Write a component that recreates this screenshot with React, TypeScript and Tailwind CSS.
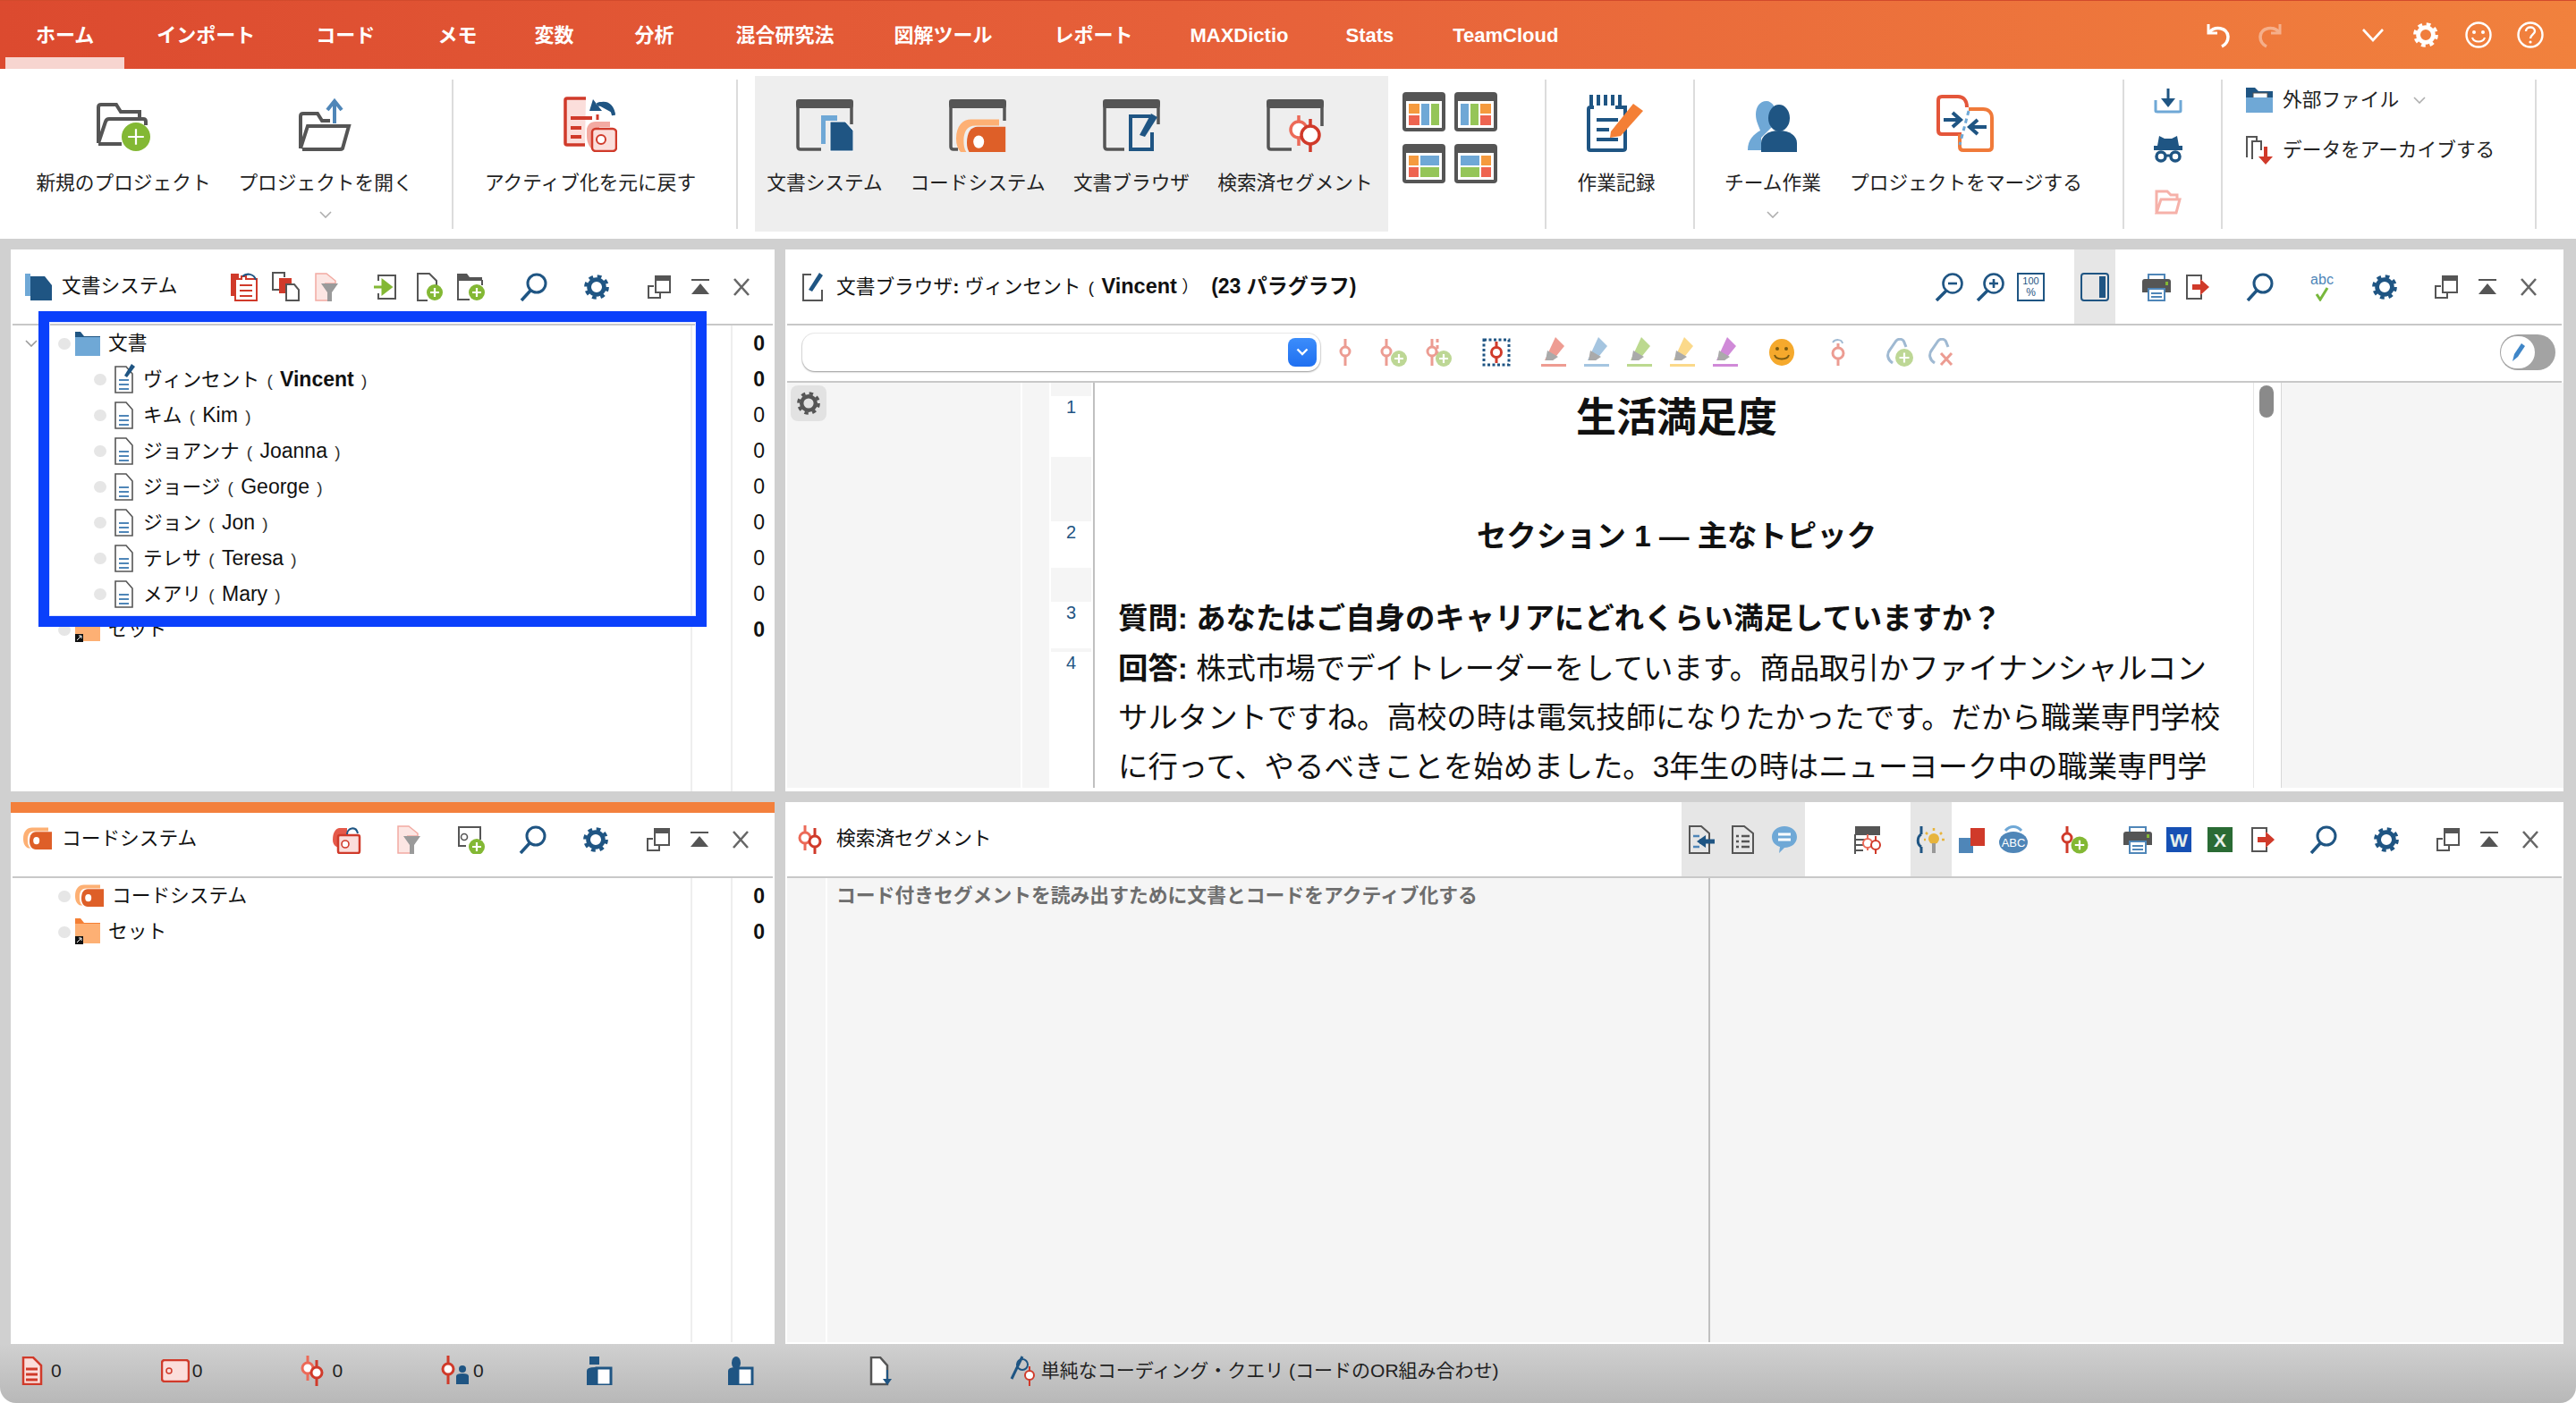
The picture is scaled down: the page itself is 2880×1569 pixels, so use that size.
import React from 'react';

const G = '#555555';
const B = '#1f5583';
const LB = '#6fa8d6';
const R = '#d03a2a';
const O = '#de5f28';
const LO = '#fdb074';
const GR = '#83b834';

type SvgProps = { w: number; h: number; className?: string; children?: React.ReactNode };
const Svg = ({ w, h, className, children }: SvgProps) => (
  <svg width={w} height={h} viewBox={`0 0 ${w} ${h}`} fill="none" className={`shrink-0 ${className || ''}`}>
    {children}
  </svg>
);

// small building blocks shared by the toolbar icons
const SegMark = ({ x, top, bottom, cy, r = 6, color = R, sw = 3 }: { x: number; top: number; bottom: number; cy: number; r?: number; color?: string; sw?: number }) => (
  <g stroke={color} strokeWidth={sw}>
    <path d={`M${x} ${top}V${cy - r}M${x} ${cy + r}V${bottom}`} />
    <circle cx={x} cy={cy} r={r} fill="#fff" />
  </g>
);
const PlusBadge = ({ cx, cy, r = 9, color = GR }: { cx: number; cy: number; r?: number; color?: string }) => (
  <g>
    <circle cx={cx} cy={cy} r={r} fill={color} />
    <path d={`M${cx - r * 0.55} ${cy}H${cx + r * 0.55}M${cx} ${cy - r * 0.55}V${cy + r * 0.55}`} stroke="#fff" strokeWidth={2.2} />
  </g>
);
const CodeTag = ({ x, y, s = 1 }: { x: number; y: number; s?: number }) => (
  <g transform={`translate(${x} ${y}) scale(${s})`}>
    <path d="M0 20C0 8 6 2 14 2H40V8H18C10 8 7 14 7 22C7 28 8 32 12 35H8C3 33 0 28 0 20Z" fill={LO} />
    <path d="M10 24C10 14 14 9 20 9H46V37H20C14 37 10 32 10 24Z" fill={O} />
    <ellipse cx="21" cy="23" rx="5" ry="6" fill="#fff" />
  </g>
);

const NewProjectIcon = () => (
  <Svg w={64} h={56}>
    <path d="M4 46V6Q4 3 7 3H24L29 11H50V20" stroke={G} strokeWidth={4} />
    <path d="M4 46L12 22Q13 19 16 19H54Q57 19 57 22V26M4 47H30" stroke={G} strokeWidth={4} />
    <PlusBadge cx={46} cy={39} r={16} />
  </Svg>
);
const OpenProjectIcon = () => (
  <Svg w={62} h={60}>
    <path d="M3 56V20Q3 17 6 17H22L27 25H36" stroke={G} strokeWidth={4} />
    <path d="M3 56L11 31H57L50 56Q49 57 47 57H5" stroke={G} strokeWidth={4} />
    <path d="M41 28V6M33 13L41 3L49 13" stroke="#4f86b8" strokeWidth={4} />
  </Svg>
);
const ResetActivationIcon = () => (
  <Svg w={60} h={62}>
    <path d="M25 2H4Q2 2 2 4V52Q2 54 4 54H24" fill="#fbdedb" stroke={R} strokeWidth={3.5} />
    <path d="M8 24H32M8 35H20M8 45H20" stroke={R} strokeWidth={4} />
    <path d="M38 20V26" stroke={R} strokeWidth={3} />
    <path d="M26 38C26 32 30 28 36 28H52V34H40V60H36C30 60 26 52 26 44Z" fill="#f3aaa2" />
    <rect x="32" y="36" width="27" height="25" rx="4" fill="#fbdedb" stroke={R} strokeWidth={2.5} />
    <circle cx="42" cy="48" r="5" fill="#fff" stroke={R} strokeWidth={2} />
    <path d="M33 3L29 16L43 16ZM36 8C46 3 56 6 58 20" fill={B} />
    <path d="M38 9C47 6 54 10 56 21" stroke={B} strokeWidth={4} />
  </Svg>
);
const Frame = ({ cut = 28, right = 28 }: { cut?: number; right?: number }) => (
  <g>
    <rect x="0" y="0" width="64" height="10" rx="3" fill={G} />
    <path d={`M2 8V53Q2 56 5 56H${cut}M62 8V${right}`} stroke={G} strokeWidth={3.5} />
  </g>
);
const DocSystemIcon = () => (
  <Svg w={64} h={59}>
    <Frame />
    <path d="M28 18H46V24H33V50H28Z" fill={LB} />
    <path d="M38 25H55L64 35V58H38Z" fill={B} stroke="#fff" strokeWidth={1} />
  </Svg>
);
const CodeSystemIcon = () => (
  <Svg w={64} h={59}>
    <Frame cut={10} right={24} />
    <CodeTag x={8} y={20} s={1.2} />
  </Svg>
);
const BrowserIcon = () => (
  <Svg w={64} h={59}>
    <Frame cut={24} />
    <path d="M53 19H31V56H55V37" stroke={B} strokeWidth={4} />
    <path d="M41 40L54 16L61 20L47 42Z" fill={B} />
  </Svg>
);
const SegmentsIcon = () => (
  <Svg w={64} h={59}>
    <Frame cut={28} right={30} />
    <SegMark x={36} top={18} bottom={52} cy={34} r={9} color="#ec6a58" sw={3.5} />
    <SegMark x={49} top={22} bottom={59} cy={40} r={10} sw={3.5} />
  </Svg>
);
const Layout = ({ cells }: { cells: [number, number, number, number, string][] }) => (
  <Svg w={48} h={44}>
    <rect width="48" height="44" rx="4" fill={G} />
    <rect x="4" y="10" width="40" height="30" fill="#fff" />
    {cells.map(([x, y, w, h, c], i) => (
      <rect key={i} x={x} y={y} width={w} height={h} fill={c} />
    ))}
  </Svg>
);
const ORG = '#f59a3e';
const RED = '#ee6450';
const BLU = '#6fa8d6';
const GRN = '#95c558';
const WorkLogIcon = () => (
  <Svg w={66} h={64}>
    <path d="M8 14H4Q2 14 2 16V60Q2 62 4 62H40Q43 62 43 60V14H32" stroke={B} strokeWidth={4} />
    <path d="M5 0V12M13 0V12M21 0V12M29 0V12M37 0V12" stroke={B} strokeWidth={4} />
    <path d="M11 28H35M11 39H25M11 50H35" stroke={B} strokeWidth={4} />
    <path d="M27 41L52 10L63 18L38 46L26 48Z" fill="#f47f35" />
  </Svg>
);
const TeamIcon = () => (
  <Svg w={58} h={58}>
    <path d="M22 1C14 1 10 8 10 16C10 24 14 30 15 34C8 38 1 44 1 56H16V42L28 30C32 24 30 12 30 6C28 3 25 1 22 1Z" fill={LB} />
    <ellipse cx="36" cy="20" rx="12" ry="15" fill={B} />
    <path d="M16 58V48C16 40 24 34 36 34C48 34 56 40 56 48V58Z" fill={B} />
  </Svg>
);
const MergeIcon = () => (
  <Svg w={66} h={64}>
    <path d="M28 44H6Q2 44 2 40V6Q2 2 6 2H24C30 2 34 6 34 14" stroke="#e4563a" strokeWidth={4} />
    <path d="M36 16H52C58 16 62 20 62 26V58Q62 62 58 62H30Q26 62 26 58V44" stroke="#f07a3a" strokeWidth={4} />
    <path d="M8 28H24M18 20L27 28L18 36" stroke={B} strokeWidth={4} />
    <path d="M56 36H40M46 28L37 36L46 44" stroke={B} strokeWidth={4} />
    <path d="M36 18L26 56" stroke={LB} strokeWidth={3} strokeDasharray="5 4" />
  </Svg>
);
const DownloadTrayIcon = () => (
  <Svg w={32} h={28}>
    <path d="M2 13V25Q2 26 4 26H28Q30 26 30 25V13" stroke={LB} strokeWidth={3} />
    <path d="M16 0V17" stroke={B} strokeWidth={3} />
    <path d="M8 11L16 21L24 11Z" fill={B} />
  </Svg>
);
const SpyIcon = () => (
  <Svg w={32} h={30}>
    <path d="M6 0L12 3H20L26 0L28 11H32V16H0V11H4Z" fill={B} />
    <circle cx="8" cy="23" r="5" stroke={B} strokeWidth={3.5} />
    <circle cx="24" cy="23" r="5" stroke={B} strokeWidth={3.5} />
    <path d="M13 22H19" stroke={B} strokeWidth={3} />
  </Svg>
);
const PinkFolderIcon = () => (
  <Svg w={30} h={30}>
    <path d="M2 26V3H14L18 7H25V11M2 27L7 12H28L24 27Z" stroke="#f6b1a9" strokeWidth={3} />
  </Svg>
);
const ExternalFolderIcon = () => (
  <Svg w={30} h={28}>
    <path d="M0 0H10L14 4H30V12H0Z" fill={B} />
    <rect x="8" y="6" width="16" height="10" fill="#fff" stroke={G} strokeWidth={1} />
    <path d="M0 11H30V28H0Z" fill={LB} />
  </Svg>
);
const ArchiveIcon = () => (
  <Svg w={30} h={32}>
    <path d="M1 24V1H12V6" stroke={G} strokeWidth={2} />
    <path d="M7 26V6H17V16" stroke={G} strokeWidth={2} />
    <path d="M22 12V26" stroke={R} strokeWidth={4} />
    <path d="M14 23H30L22 32Z" fill={R} />
  </Svg>
);
const Chevron = ({ c = '#aeaeae', className }: { c?: string; className?: string }) => (
  <Svg w={14} h={8} className={className}>
    <path d="M1 1L7 7L13 1" stroke={c} strokeWidth={1.6} />
  </Svg>
);

// panel toolbar icons
const DocIcon = ({ pen }: { pen?: boolean }) => (
  <Svg w={24} h={34}>
    <path d="M2 3H14L21 11V32H2Z" stroke={G} strokeWidth={1.6} fill="#fff" />
    <path d="M6 18H17M6 23H17M6 28H17" stroke="#4f86b8" strokeWidth={2} />
    {pen && <path d="M12 13L20 0L24 3L15 15Z" fill={B} />}
  </Svg>
);
const DocSmall = () => (
  <Svg w={30} h={32}>
    <path d="M0 2H6V27H0Z" fill={LB} />
    <path d="M6 5H22L30 15V32H6Z" fill={B} />
  </Svg>
);
const DocUndoIcon = () => (
  <Svg w={30} h={32}>
    <path d="M0 1H9V26H0Z" fill={R} />
    <path d="M5 7H12V4H17V7H29V31H5Z" fill="#fff" stroke={R} strokeWidth={2} />
    <path d="M10 14H24M10 20H24M10 26H24" stroke={R} strokeWidth={2} />
    <path d="M13 4C18 0 26 1 28 8" stroke={B} strokeWidth={2} />
  </Svg>
);
const CopyDocsIcon = () => (
  <Svg w={32} h={33}>
    <path d="M10 20H2V1H15V6" stroke={G} strokeWidth={2} />
    <path d="M9 7H23V20H16V24H9Z" fill={R} />
    <path d="M17 14H26L31 20V32H17Z" fill="#fff" stroke={G} strokeWidth={2} />
  </Svg>
);
const FilterDocIcon = ({ w = 26, h = 32 }: { w?: number; h?: number }) => (
  <Svg w={w} h={h}>
    <path d="M1 1H13L23 9V12H12L17 22V31H1Z" fill="#fce6e3" stroke="#f2aba3" strokeWidth={1.5} />
    <path d="M7 12H26L19 22V32H14V22Z" fill="#9a9a9a" />
  </Svg>
);
const ImportIcon = () => (
  <Svg w={26} h={30}>
    <path d="M5 8V2H24V28H5V22" stroke={G} strokeWidth={2} />
    <path d="M0 15H10M10 8L19 15L10 22Z" fill={GR} stroke={GR} strokeWidth={3} />
  </Svg>
);
const DocPlusIcon = () => (
  <Svg w={30} h={32}>
    <path d="M12 31H1V1H14L22 9V16" stroke={G} strokeWidth={2} />
    <PlusBadge cx={20} cy={22} r={9} />
  </Svg>
);
const FolderPlusSmall = () => (
  <Svg w={32} h={32}>
    <path d="M0 1H11L14 5H28V9H0Z" fill={G} />
    <path d="M1 8V30H14M28 8V14" stroke={G} strokeWidth={2} />
    <PlusBadge cx={22} cy={22} r={9} />
  </Svg>
);
const SearchIcon = () => (
  <Svg w={32} h={32}>
    <circle cx="19" cy="12" r="10" stroke={B} strokeWidth={3} />
    <path d="M12 20L2 31" stroke={B} strokeWidth={3.5} />
  </Svg>
);
const GearIcon = ({ c = B, s = 28 }: { c?: string; s?: number }) => (
  <Svg w={s} h={s}>
    <circle cx={s / 2} cy={s / 2} r={s * 0.3} stroke={c} strokeWidth={s * 0.17} />
    <circle cx={s / 2} cy={s / 2} r={s * 0.43} stroke={c} strokeWidth={s * 0.13} strokeDasharray={`${s * 0.17} ${s * 0.17}`} />
  </Svg>
);
const WindowIcon = () => (
  <Svg w={28} h={27}>
    <path d="M8 13H2V26H15V21" stroke={G} strokeWidth={2} />
    <rect x="9" y="1" width="18" height="6" fill={G} />
    <rect x="10" y="2" width="16" height="18" stroke={G} strokeWidth={2} />
  </Svg>
);
const CollapseIcon = () => (
  <Svg w={22} h={17}>
    <path d="M1 1H21" stroke={G} strokeWidth={2} />
    <path d="M11 5L21 17H1Z" fill={G} />
  </Svg>
);
const CloseIcon = () => (
  <Svg w={20} h={20}>
    <path d="M2 1L18 19M18 1L2 19" stroke="#666" strokeWidth={2.6} />
  </Svg>
);
const ZoomIcon = ({ plus }: { plus?: boolean }) => (
  <Svg w={32} h={32}>
    <circle cx="20" cy="12" r="10.5" stroke={B} strokeWidth={2.6} />
    <path d={plus ? 'M15 12H25M20 7V17' : 'M15 12H25'} stroke={B} strokeWidth={2.6} />
    <path d="M13 20L2 31" stroke={B} strokeWidth={3.5} />
  </Svg>
);
const HundredIcon = () => (
  <Svg w={32} h={32}>
    <rect x="1" y="1" width="29" height="30" stroke={B} strokeWidth={2} />
    <text x="15.5" y="13" textAnchor="middle" fontSize="11" fill={B}>100</text>
    <text x="15.5" y="26" textAnchor="middle" fontSize="12" fill={B}>%</text>
  </Svg>
);
const PanelRightIcon = () => (
  <Svg w={32} h={32}>
    <rect x="1" y="1" width="30" height="30" rx="3" stroke={B} strokeWidth={2} />
    <rect x="21" y="4" width="7" height="24" fill={B} />
  </Svg>
);
const PrinterIcon = () => (
  <Svg w={32} h={32}>
    <path d="M7 8V2H25V8" stroke="#4f86b8" strokeWidth={2} />
    <path d="M3 7H29Q32 7 32 10V22H0V10Q0 7 3 7Z" fill={G} />
    <rect x="26" y="10" width="3" height="4" fill={GR} />
    <rect x="7" y="18" width="18" height="13" fill="#fff" stroke="#4f86b8" strokeWidth={2} />
    <path d="M10 23H22M10 27H22" stroke="#4f86b8" strokeWidth={2} />
  </Svg>
);
const ExportIcon = () => (
  <Svg w={28} h={28}>
    <path d="M18 6V1H2V27H18V22" stroke={G} strokeWidth={2} />
    <path d="M8 14H18" stroke={R} strokeWidth={6} />
    <path d="M17 5L27 14L17 23Z" fill={R} />
  </Svg>
);
const SpellIcon = () => (
  <Svg w={34} h={32}>
    <text x="17" y="13" textAnchor="middle" fontSize="16" fill="#4f86b8">abc</text>
    <path d="M11 24L15 30L23 17" stroke="#78b83c" strokeWidth={3} />
  </Svg>
);
const SegTool = ({ kind }: { kind: 0 | 1 | 2 }) => (
  <Svg w={32} h={32}>
    <SegMark x={8} top={1} bottom={31} cy={15} r={5} color="#ec9c92" sw={3} />
    {kind === 2 && <path d="M14 1V24" stroke="#ec9c92" strokeWidth={3} strokeDasharray="4 3" />}
    {kind > 0 && <PlusBadge cx={kind === 2 ? 21 : 22} cy={23} r={9} color="#bdd795" />}
  </Svg>
);
const SegDashed = () => (
  <Svg w={32} h={32}>
    <rect x="2" y="2" width="28" height="28" stroke={B} strokeWidth={3} strokeDasharray="3 2.5" />
    <SegMark x={16} top={4} bottom={28} cy={16} r={5.5} sw={3} />
  </Svg>
);
const PenTool = ({ c }: { c: string }) => (
  <Svg w={30} h={34}>
    <path d="M17 0L27 10L14 26H5Z" fill={c} />
    <path d="M8 15L20 22L14 26H6Z" fill="#aaaaaa" />
    <path d="M1 31.5H29" stroke={c} strokeWidth={3} />
  </Svg>
);
const SmileIcon = () => (
  <Svg w={30} h={32}>
    <ellipse cx="15" cy="16" rx="14" ry="15" fill="#f5a92c" />
    <circle cx="10" cy="12" r="2" fill="#7a5a10" />
    <circle cx="20" cy="12" r="2" fill="#7a5a10" />
    <path d="M7 19C9 25 21 25 23 19" stroke="#7a5a10" strokeWidth={2} />
  </Svg>
);
const SegUndoTool = () => (
  <Svg w={24} h={32}>
    <path d="M5 5C8 1 15 1 16 6" stroke="#9fb9d2" strokeWidth={2} />
    <SegMark x={11} top={6} bottom={31} cy={17} r={6} color="#ec9c92" sw={3} />
  </Svg>
);
const LinkTool = ({ x }: { x?: boolean }) => (
  <Svg w={32} h={32}>
    <path d="M8 28C2 24 1 18 5 13L12 3C15 0 20 1 21 5L23 10" stroke="#9fb9d2" strokeWidth={3} />
    {x ? (
      <path d="M15 17L27 30M27 17L15 30" stroke="#ec9c92" strokeWidth={3} />
    ) : (
      <PlusBadge cx={21} cy={22} r={10} color="#bdd795" />
    )}
  </Svg>
);
const DocImportIcon = () => (
  <Svg w={30} h={32}>
    <path d="M1 1H14L23 9V31H1Z" stroke={G} strokeWidth={2} />
    <path d="M5 12H12M5 24H12" stroke="#4f86b8" strokeWidth={2.5} />
    <path d="M12 18H29" stroke={B} strokeWidth={5} />
    <path d="M19 11L9 18L19 25Z" fill={B} />
  </Svg>
);
const DocListIcon = () => (
  <Svg w={26} h={32}>
    <path d="M1 1H14L24 9V31H1Z" stroke={G} strokeWidth={2} />
    <path d="M5 12H8M11 12H20M5 18H8M11 18H20M5 24H8M11 24H20" stroke={G} strokeWidth={2.5} />
  </Svg>
);
const CommentIcon = () => (
  <Svg w={30} h={32}>
    <path d="M15 1C23 1 29 6 29 13C29 20 23 25 15 25L9 31L10 24C4 22 1 18 1 13C1 6 7 1 15 1Z" fill={LB} />
    <path d="M8 10H22M8 16H22" stroke="#fff" strokeWidth={3} />
  </Svg>
);
const TableSegIcon = () => (
  <Svg w={30} h={32}>
    <rect x="1" y="1" width="28" height="10" fill={G} />
    <path d="M1 10V32M1 16H12M1 22H10M1 28H10" stroke={G} strokeWidth={2} />
    <SegMark x={15} top={10} bottom={28} cy={20} r={5} color="#ec6a58" sw={2} />
    <SegMark x={24} top={12} bottom={32} cy={22} r={5} sw={2} />
  </Svg>
);
const SegBulbIcon = () => (
  <Svg w={34} h={32}>
    <path d="M6 1V10M6 24V31" stroke={B} strokeWidth={3} />
    <path d="M6 10C1 13 1 21 6 24" stroke={B} strokeWidth={3} />
    <circle cx="20" cy="15" r="6" fill="#e7b43c" />
    <path d="M20 20V31" stroke="#999" strokeWidth={4} />
    <path d="M20 3V6M11 8L13 10M29 8L27 10M9 16H11M29 16H32" stroke="#e7b43c" strokeWidth={2.5} />
  </Svg>
);
const SquaresIcon = () => (
  <Svg w={30} h={32}>
    <rect x="0" y="14" width="16" height="17" fill="#4f86b8" />
    <rect x="13" y="3" width="16" height="20" fill={R} />
  </Svg>
);
const CloudAbcIcon = () => (
  <Svg w={32} h={32}>
    <path d="M7 6C12 0 20 0 25 6" stroke={LB} strokeWidth={3} />
    <ellipse cx="16" cy="19" rx="16" ry="12" fill="#4f86b8" />
    <text x="16" y="24" textAnchor="middle" fontSize="13" fill="#fff">ABC</text>
  </Svg>
);
const SegPlusSolid = () => (
  <Svg w={32} h={32}>
    <SegMark x={7} top={1} bottom={31} cy={14} r={5} sw={3} />
    <PlusBadge cx={21} cy={22} r={9.5} />
  </Svg>
);
const OfficeIcon = ({ c, l }: { c: string; l: string }) => (
  <Svg w={28} h={28}>
    <rect width="28" height="28" fill={c} />
    <text x="14" y="22" textAnchor="middle" fontSize="21" fontWeight="bold" fill="#e8f0ea">{l}</text>
  </Svg>
);
const BrowserTitleIcon = () => (
  <Svg w={24} h={32}>
    <path d="M10 2H1V31H22V19" stroke={G} strokeWidth={2} />
    <path d="M7 19L19 0L23 3L11 21Z" fill={B} />
  </Svg>
);
const CodeTitleIcon = () => (
  <Svg w={32} h={28}>
    <CodeTag x={0} y={0} s={0.7} />
  </Svg>
);
const SegTitleIcon = () => (
  <Svg w={30} h={32}>
    <SegMark x={8} top={0} bottom={28} cy={14} r={6} color="#ec6a58" />
    <SegMark x={19} top={3} bottom={32} cy={18} r={6} sw={3} />
  </Svg>
);
const CodeTagPlus = () => (
  <Svg w={34} h={32}>
    <path d="M4 24V2H28V16M4 23H12" stroke={G} strokeWidth={2} />
    <circle cx="10" cy="13" r="3.5" stroke={G} strokeWidth={1.6} />
    <PlusBadge cx={24} cy={24} r={9} />
  </Svg>
);
const CodeReset = () => (
  <Svg w={34} h={32}>
    <path d="M2 16C2 8 5 4 9 3L18 3V26C8 26 2 24 2 16Z" fill="#e5594a" />
    <rect x="8" y="11" width="24" height="20" rx="2" fill="#fbdedb" stroke={R} strokeWidth={2.5} />
    <circle cx="16" cy="21" r="4" fill="#fff" stroke={R} strokeWidth={1.6} />
    <path d="M18 10C18 3 28 0 30 9" stroke={B} strokeWidth={2} />
  </Svg>
);
const FolderBlue = () => (
  <Svg w={28} h={27}>
    <path d="M0 0H6L10 5H28V12H0Z" fill={B} />
    <path d="M0 6H28V27H0Z" fill={LB} />
  </Svg>
);
const SetFolder = () => (
  <Svg w={28} h={30}>
    <path d="M0 0H6L10 5H28V12H0Z" fill="#f47f35" />
    <path d="M0 6H28V28H0Z" fill={LO} />
    <rect x="0" y="20" width="9" height="9" fill="#111" />
    <path d="M2 27L7 22M4 22H7V25" stroke="#fff" strokeWidth={1} />
  </Svg>
);

// status bar icons
const StatDoc = () => (
  <Svg w={24} h={32}>
    <path d="M2 1H13L22 10V31H2Z" fill="#fbdedb" stroke={R} strokeWidth={2.5} />
    <path d="M5 14H18M5 20H18M5 26H18" stroke={R} strokeWidth={3} />
  </Svg>
);
const StatCode = () => (
  <Svg w={32} h={26}>
    <rect x="1" y="1" width="30" height="24" rx="3" fill="#fbdedb" stroke={R} strokeWidth={2.5} />
    <circle cx="9" cy="13" r="3" stroke={R} strokeWidth={1.5} />
  </Svg>
);
const StatSeg = () => (
  <Svg w={30} h={34}>
    <SegMark x={8} top={0} bottom={28} cy={14} r={6} color="#ec6a58" />
    <SegMark x={18} top={5} bottom={34} cy={19} r={6} sw={3} />
  </Svg>
);
const StatSegUser = () => (
  <Svg w={34} h={34}>
    <SegMark x={8} top={0} bottom={32} cy={15} r={6} sw={3} />
    <circle cx="24" cy="15" r="4" fill={B} />
    <path d="M17 32V23Q17 20 24 20Q31 20 31 23V32Z" fill={B} />
  </Svg>
);
const StatDocUser = ({ round }: { round?: boolean }) => (
  <Svg w={30} h={32}>
    {round ? <ellipse cx="10" cy="7" rx="5" ry="7" fill={B} /> : <rect x="4" y="0" width="11" height="9" fill={B} />}
    <path d="M1 32V16Q1 12 10 12Q14 12 16 14V32Z" fill={B} />
    <rect x="12" y="13" width="16" height="19" fill="#fff" stroke={B} strokeWidth={3} />
  </Svg>
);
const StatDocDown = () => (
  <Svg w={28} h={33}>
    <path d="M2 1H12L20 10V31H2Z" fill="#fff" stroke={G} strokeWidth={2.5} />
    <path d="M20 15V29" stroke={B} strokeWidth={2} />
    <path d="M15 25L20 32L25 25Z" fill={B} />
  </Svg>
);
const StatQuery = () => (
  <Svg w={30} h={34}>
    <path d="M14 1L2 26" stroke={B} strokeWidth={3} />
    <circle cx="14" cy="10" r="6" stroke={B} strokeWidth={2} />
    <SegMark x={22} top={12} bottom={34} cy={22} r={5} sw={2} />
  </Svg>
);

const I = ({ c, children }: { c?: string; children: React.ReactNode }) => (
  <div className={`flex w-[46px] shrink-0 items-center justify-center ${c || ''}`}>{children}</div>
);
const Hl = ({ c, children }: { c?: string; children: React.ReactNode }) => (
  <div className={`flex shrink-0 items-center bg-[#e6e6e6] ${c || ''}`}>{children}</div>
);

const tabs = [
  { label: 'インポート', c: 'ml-[2px]' },
  { label: 'コード', c: '' },
  { label: 'メモ', c: 'ml-[2px]' },
  { label: '変数', c: '-ml-[4px]' },
  { label: '分析', c: '' },
  { label: '混合研究法', c: 'ml-[1px]' },
  { label: '図解ツール', c: '-ml-[1px]' },
  { label: 'レポート', c: 'ml-[1px]' },
  { label: 'MAXDictio', c: '-ml-[4px]' },
  { label: 'Stats', c: '-ml-[4px]' },
  { label: 'TeamCloud', c: '-ml-[2px]' },
];

const RibbonItem = ({ label, icon, c, chev }: { label: string; icon: React.ReactNode; c?: string; chev?: boolean }) => (
  <div className={`flex shrink-0 flex-col items-center ${c || ''}`}>
    <div className="flex h-[60px] items-end">{icon}</div>
    <div className="mt-[24px] text-[21.7px] leading-[22px] whitespace-nowrap text-[#222]">{label}</div>
    {chev && <Chevron className="mt-[20px]" />}
  </div>
);
const Divider = () => <div className="h-[167px] w-[2px] shrink-0 self-center bg-[#dcdcdc]" />;

const Dot = () => <div className="h-[13px] w-[14px] shrink-0 rounded-full bg-[#e6e6e6]" />;
const Row = ({ icon, chev, child, children }: { icon: React.ReactNode; chev?: boolean; child?: boolean; children: React.ReactNode }) => (
  <div className={`flex h-[40px] items-center whitespace-nowrap text-[21.7px] text-[#111] ${child ? 'pl-[93px]' : chev ? 'pl-[16px]' : 'pl-[53px]'}`}>
    {chev && <Chevron c="#9a9a9a" className="mr-[23px]" />}
    <Dot />
    <div className={child ? 'ml-[8px]' : 'ml-[5px]'}>{icon}</div>
    <div className={child ? 'ml-[9px]' : 'ml-[9px]'}>{children}</div>
  </div>
);
const Name = ({ jp, en, bold }: { jp: string; en: string; bold?: boolean }) => (
  <>
    {jp}
    <span className="px-[3px] text-[19px] text-[#333]"> ( </span>
    <span className={`text-[23px] ${bold ? 'font-bold' : ''}`}>{en}</span>
    <span className="px-[3px] text-[19px] text-[#333]"> )</span>
  </>
);
const Counts = ({ items }: { items: boolean[] }) => (
  <div className="flex w-[47px] shrink-0 flex-col">
    {items.map((b, i) => (
      <div key={i} className={`flex h-[40px] items-center justify-end pr-[11px] text-[23px] text-[#111] ${b ? 'font-bold' : ''}`}>0</div>
    ))}
  </div>
);
const MidCol = () => <div className="w-[47px] shrink-0 border-x-2 border-[#eeeeee]" />;

const people: [string, string][] = [
  ['キム', 'Kim'],
  ['ジョアンナ', 'Joanna'],
  ['ジョージ', 'George'],
  ['ジョン', 'Jon'],
  ['テレサ', 'Teresa'],
  ['メアリ', 'Mary'],
];

const PanelCaps = () => (
  <>
    <I c="ml-[24px]"><WindowIcon /></I>
    <I><CollapseIcon /></I>
    <I><CloseIcon /></I>
  </>
);

export default function App() {
  return (
    <div className="flex h-[1569px] w-[2880px] flex-col overflow-hidden bg-white [font-family:'Liberation_Sans','Noto_Sans_CJK_JP',sans-serif]">
      {/* Tabs */}
      <div className="flex h-[77px] shrink-0 items-stretch border-t border-[#d24a2c] bg-linear-to-r from-[#dc4a2f] via-[#e7623a] to-[#f1813d] pl-[6px] pr-[36px] text-[22px] font-bold text-white">
        <div className="flex items-center px-[34px] shadow-[inset_0_-13px_0_#f7d5d0]">ホーム</div>
        {tabs.map((t) => (
          <div key={t.label} className={`flex items-center px-[34px] whitespace-nowrap ${t.c}`}>{t.label}</div>
        ))}
        <div className="ml-auto flex items-center">
          <Svg w={28} h={30} className="mr-[30px]">
            <path d="M3 3V13H13" stroke="#fff" strokeWidth={3} fill="none" />
            <path d="M4 12C10 5 24 6 25 17C25 22 22 26 18 28" stroke="#fff" strokeWidth={3.5} />
          </Svg>
          <Svg w={28} h={30} className="mr-[88px] opacity-40">
            <path d="M25 3V13H15" stroke="#fff" strokeWidth={3} />
            <path d="M24 12C18 5 4 6 3 17C3 22 6 26 10 28" stroke="#fff" strokeWidth={3.5} />
          </Svg>
          <Svg w={26} h={16} className="mr-[32px]">
            <path d="M2 2L13 14L24 2" stroke="#fff" strokeWidth={2.6} />
          </Svg>
          <GearIcon c="#fff" s={28} />
          <Svg w={30} h={30} className="ml-[30px]">
            <circle cx="15" cy="15" r="13.5" stroke="#fff" strokeWidth={2.4} />
            <circle cx="10" cy="12" r="2" fill="#fff" />
            <circle cx="20" cy="12" r="2" fill="#fff" />
            <path d="M8 18C10 24 20 24 22 18" stroke="#fff" strokeWidth={2.2} />
          </Svg>
          <Svg w={30} h={30} className="ml-[28px]">
            <circle cx="15" cy="15" r="13.5" stroke="#fff" strokeWidth={2.4} />
            <path d="M10 11C10 5 20 5 20 11C20 14 15 15 15 19" stroke="#fff" strokeWidth={2.4} />
            <circle cx="15" cy="23" r="1.6" fill="#fff" />
          </Svg>
        </div>
      </div>

      {/* Ribbon */}
      <div className="flex h-[190px] shrink-0 items-stretch bg-white">
        <div className="flex w-[505px] shrink-0 pl-[25px] pt-[33px]">
          <RibbonItem c="w-[226px]" label="新規のプロジェクト" icon={<NewProjectIcon />} />
          <RibbonItem c="w-[226px]" label="プロジェクトを開く" icon={<OpenProjectIcon />} chev />
        </div>
        <Divider />
        <div className="flex w-[316px] shrink-0 justify-center pr-[10px] pt-[33px]">
          <RibbonItem label="アクティブ化を元に戻す" icon={<ResetActivationIcon />} />
        </div>
        <Divider />
        <div className="ml-[19px] my-[8px] flex w-[708px] shrink-0 bg-[#eeeeee] pt-[25px]">
          <RibbonItem c="w-[156px]" label="文書システム" icon={<DocSystemIcon />} />
          <RibbonItem c="w-[186px]" label="コードシステム" icon={<CodeSystemIcon />} />
          <RibbonItem c="w-[158px]" label="文書ブラウザ" icon={<BrowserIcon />} />
          <RibbonItem c="w-[208px]" label="検索済セグメント" icon={<SegmentsIcon />} />
        </div>
        <div className="ml-[16px] grid w-[157px] shrink-0 grid-cols-[48px_48px] content-start gap-x-[10px] gap-y-[14px] pt-[26px]">
          <Layout cells={[[7, 13, 12, 11, ORG], [7, 26, 12, 11, RED], [21, 13, 9, 24, BLU], [32, 13, 9, 24, GRN]]} />
          <Layout cells={[[7, 13, 9, 24, BLU], [18, 13, 9, 24, GRN], [29, 13, 12, 11, ORG], [29, 26, 12, 11, RED]]} />
          <Layout cells={[[7, 13, 11, 11, ORG], [7, 26, 11, 11, RED], [20, 13, 21, 11, BLU], [20, 26, 21, 11, GRN]]} />
          <Layout cells={[[7, 13, 21, 11, BLU], [7, 26, 21, 11, GRN], [30, 13, 11, 11, ORG], [30, 26, 11, 11, RED]]} />
        </div>
        <div className="ml-[2px] flex items-stretch"><Divider /></div>
        <div className="flex w-[164px] shrink-0 justify-center pr-[8px] pt-[33px]">
          <RibbonItem label="作業記録" icon={<WorkLogIcon />} />
        </div>
        <Divider />
        <div className="flex w-[478px] shrink-0 pt-[33px]">
          <RibbonItem c="w-[174px]" label="チーム作業" icon={<TeamIcon />} chev />
          <RibbonItem c="w-[258px]" label="プロジェクトをマージする" icon={<MergeIcon />} />
        </div>
        <Divider />
        <div className="flex w-[108px] shrink-0 flex-col items-center pr-[10px] pt-[22px]">
          <DownloadTrayIcon />
          <div className="mt-[25px]"><SpyIcon /></div>
          <div className="mt-[29px]"><PinkFolderIcon /></div>
        </div>
        <Divider />
        <div className="flex w-[349px] shrink-0 flex-col pl-[26px] pt-[20px] text-[21.7px] text-[#222]">
          <div className="flex h-[30px] items-center">
            <ExternalFolderIcon />
            <span className="ml-[11px]">外部ファイル</span>
            <Chevron className="ml-[16px]" />
          </div>
          <div className="mt-[26px] flex h-[30px] items-center">
            <ArchiveIcon />
            <span className="ml-[11px]">データをアーカイブする</span>
          </div>
        </div>
        <Divider />
      </div>

      {/* Workspace */}
      <div className="flex min-h-0 flex-1 gap-[12px] bg-[#d0d0d0] pl-[12px] pr-[14px] pt-[12px]">
        <div className="flex w-[854px] shrink-0 flex-col gap-[12px]">
          <section className="relative flex h-[606px] shrink-0 flex-col bg-white">
            <header className="mx-[2px] flex h-[85px] shrink-0 items-center border-b-2 border-[#c8c8c8]">
              <div className="flex w-[236px] shrink-0 items-center pl-[14px] text-[21.7px] text-[#111]">
                <DocSmall />
                <span className="ml-[11px]">文書システム</span>
              </div>
              <I><DocUndoIcon /></I>
              <I><CopyDocsIcon /></I>
              <I><FilterDocIcon /></I>
              <I c="ml-[20px]"><ImportIcon /></I>
              <I c="ml-[4px]"><DocPlusIcon /></I>
              <I><FolderPlusSmall /></I>
              <I c="ml-[24px]"><SearchIcon /></I>
              <I c="ml-[24px]"><GearIcon /></I>
              <PanelCaps />
            </header>
            <div className="flex min-h-0 flex-1">
              <div className="min-w-0 flex-1">
                <Row chev icon={<FolderBlue />}>文書</Row>
                <Row child icon={<DocIcon pen />}><Name jp="ヴィンセント" en="Vincent" bold /></Row>
                {people.map(([jp, en]) => (
                  <Row key={en} child icon={<DocIcon />}><Name jp={jp} en={en} /></Row>
                ))}
                <Row icon={<SetFolder />}>セット</Row>
              </div>
              <MidCol />
              <Counts items={[true, true, false, false, false, false, false, false, true]} />
            </div>
            {/* highlight frame added on top of the screenshot */}
            <div className="pointer-events-none absolute left-[31px] top-[69px] h-[353px] w-[747px] border-[12px] border-[#0a40fb] shadow-[inset_0_0_0_1px_#dfe5ff]" />
          </section>

          <section className="flex min-h-0 flex-1 flex-col border-t-[12px] border-[#f3803c] bg-white">
            <header className="mx-[2px] flex h-[73px] shrink-0 items-center border-b-2 border-[#c8c8c8] pb-[12px]">
              <div className="flex w-[350px] shrink-0 items-center pl-[12px] text-[21.7px] text-[#111]">
                <CodeTitleIcon />
                <span className="ml-[11px]">コードシステム</span>
              </div>
              <I><CodeReset /></I>
              <I c="ml-[24px]"><FilterDocIcon /></I>
              <I c="ml-[23px]"><CodeTagPlus /></I>
              <I c="ml-[24px]"><SearchIcon /></I>
              <I c="ml-[24px]"><GearIcon /></I>
              <PanelCaps />
            </header>
            <div className="flex min-h-0 flex-1 pb-[2px]">
              <div className="min-w-0 flex-1">
                <Row icon={<CodeTitleIcon />}>コードシステム</Row>
                <Row icon={<SetFolder />}>セット</Row>
              </div>
              <MidCol />
              <Counts items={[true, true]} />
            </div>
          </section>
        </div>

        <div className="flex min-w-0 flex-1 flex-col gap-[12px]">
          <section className="flex h-[606px] shrink-0 flex-col bg-white">
            <header className="mx-[2px] flex h-[85px] shrink-0 items-stretch border-b-2 border-[#c8c8c8] text-[21.7px] text-[#111]">
              <div className="flex w-[1276px] shrink-0 items-center pl-[17px]">
                <BrowserTitleIcon />
                <span className="ml-[14px] whitespace-nowrap">
                  文書ブラウザ<span className="font-bold">:</span> ヴィンセント
                  <span className="px-[3px] text-[19px]"> ( </span>
                  <span className="text-[23.5px] font-bold">Vincent</span>
                  <span className="text-[19px]"> ）</span>
                  <span className="ml-[14px] text-[23px] font-bold">(23 パラグラフ)</span>
                </span>
              </div>
              <I><ZoomIcon /></I>
              <I><ZoomIcon plus /></I>
              <I><HundredIcon /></I>
              <Hl c="ml-[25px]"><I><PanelRightIcon /></I></Hl>
              <I c="ml-[23px]"><PrinterIcon /></I>
              <I><ExportIcon /></I>
              <I c="ml-[24px]"><SearchIcon /></I>
              <I c="ml-[23px]"><SpellIcon /></I>
              <I c="ml-[24px]"><GearIcon /></I>
              <I c="ml-[23px]"><WindowIcon /></I>
              <I><CollapseIcon /></I>
              <I><CloseIcon /></I>
            </header>
            <div className="mx-[2px] flex h-[64px] shrink-0 items-center border-b-2 border-[#c8c8c8] pb-[3px]">
              <div className="ml-[17px] flex h-[42px] w-[579px] shrink-0 items-center justify-end rounded-[14px] bg-white pr-[4px] shadow-[0_1px_2px_#9a9a9a,0_0_0_1px_#ececec]">
                <div className="flex h-[32px] w-[32px] items-center justify-center rounded-[8px] bg-linear-to-b from-[#3c8dfb] to-[#1f6ff0]">
                  <Svg w={14} h={9}>
                    <path d="M1.5 1.5L7 7L12.5 1.5" stroke="#fff" strokeWidth={2.4} />
                  </Svg>
                </div>
              </div>
              <I c="ml-[13px]"><SegTool kind={0} /></I>
              <I><SegTool kind={1} /></I>
              <I c="ml-[5px]"><SegTool kind={2} /></I>
              <I c="ml-[18px]"><SegDashed /></I>
              <I c="ml-[18px]"><PenTool c="#ee9c92" /></I>
              <I c="ml-[2px]"><PenTool c="#a5c5e0" /></I>
              <I c="ml-[2px]"><PenTool c="#bcd98f" /></I>
              <I c="ml-[2px]"><PenTool c="#fbd98a" /></I>
              <I c="ml-[2px]"><PenTool c="#d08ad8" /></I>
              <I c="ml-[17px]"><SmileIcon /></I>
              <I c="ml-[18px]"><SegUndoTool /></I>
              <I c="ml-[22px]"><LinkTool /></I>
              <I c="ml-[1px]"><LinkTool x /></I>
              <div className="ml-auto mr-[7px] flex h-[40px] w-[62px] items-center justify-start rounded-full bg-[#a3a3a3] pl-[1px]">
                <div className="flex h-[36px] w-[38px] items-center justify-center rounded-full bg-white">
                  <Svg w={18} h={24}>
                    <path d="M3 22L5 14L13 2L17 5L9 17Z" fill="#3f86c8" />
                  </Svg>
                </div>
              </div>
            </div>
            <div className="flex min-h-0 flex-1 pb-[4px] pl-[2px]">
              <div className="w-[261px] shrink-0 bg-[#f5f5f5] pl-[4px] pt-[3px]">
                <div className="flex h-[40px] w-[40px] items-center justify-center rounded-[8px] bg-[#e2e2e2]">
                  <GearIcon c="#555" s={26} />
                </div>
              </div>
              <div className="ml-[2px] w-[30px] shrink-0 bg-[#f5f5f5]" />
              <div className="ml-[2px] flex w-[49px] shrink-0 flex-col border-r-2 border-[#c0c0c0] pr-[2px] text-center text-[20px] leading-[24px] text-[#1f5583]">
                <div className="h-[15px] shrink-0 bg-[#f5f5f5]" />
                <div className="h-[68px] shrink-0">1</div>
                <div className="h-[72px] shrink-0 bg-[#f5f5f5]" />
                <div className="h-[52px] shrink-0">2</div>
                <div className="h-[38px] shrink-0 bg-[#f5f5f5]" />
                <div className="h-[52px] shrink-0">3</div>
                <div className="h-[4px] shrink-0 bg-[#f5f5f5]" />
                <div className="flex-1">4</div>
              </div>
              <div className="min-w-0 flex-1 overflow-hidden pl-[26px] pr-[20px] text-[#111]">
                <div className="mt-[12px] text-center text-[45px] leading-[56px] font-bold">生活満足度</div>
                <div className="mt-[82px] text-center text-[33.4px] leading-[44px] font-bold">セクション 1 — 主なトピック</div>
                <div className="mt-[46px] text-[33.4px] leading-[48px] font-bold whitespace-nowrap">質問: あなたはご自身のキャリアにどれくらい満足していますか？</div>
                <div className="mt-[4px] text-[33.4px] leading-[55px] whitespace-nowrap">
                  <span className="font-bold">回答:</span> 株式市場でデイトレーダーをしています。商品取引かファイナンシャルコン<br />
                  サルタントですね。高校の時は電気技師になりたかったです。だから職業専門学校<br />
                  に行って、やるべきことを始めました。3年生の時はニューヨーク中の職業専門学
                </div>
              </div>
              <div className="w-[31px] shrink-0 border-l border-[#e6e6e6] pl-[6px] pt-[3px]">
                <div className="h-[36px] w-[16px] rounded-full bg-[#8a8a8a]" />
              </div>
              <div className="w-[316px] shrink-0 border-l border-[#d8d8d8] bg-[#f5f5f5]" />
            </div>
          </section>

          <section className="flex min-h-0 flex-1 flex-col bg-white">
            <header className="mx-[2px] flex h-[85px] shrink-0 items-stretch border-b-2 border-[#c8c8c8]">
              <div className="flex w-[1000px] shrink-0 items-center pl-[12px] text-[21.7px] text-[#111]">
                <SegTitleIcon />
                <span className="ml-[13px]">検索済セグメント</span>
              </div>
              <Hl>
                <I><DocImportIcon /></I>
                <I><DocListIcon /></I>
                <I><CommentIcon /></I>
              </Hl>
              <I c="ml-[47px]"><TableSegIcon /></I>
              <Hl c="ml-[25px]"><I><SegBulbIcon /></I></Hl>
              <I><SquaresIcon /></I>
              <I><CloudAbcIcon /></I>
              <I c="ml-[23px]"><SegPlusSolid /></I>
              <I c="ml-[24px]"><PrinterIcon /></I>
              <I><OfficeIcon c="#1650b4" l="W" /></I>
              <I><OfficeIcon c="#2a6b34" l="X" /></I>
              <I c="ml-[2px]"><ExportIcon /></I>
              <I c="ml-[22px]"><SearchIcon /></I>
              <I c="ml-[24px]"><GearIcon /></I>
              <I c="ml-[23px]"><WindowIcon /></I>
              <I><CollapseIcon /></I>
              <I><CloseIcon /></I>
            </header>
            <div className="flex min-h-0 flex-1 pb-[2px] pl-[2px]">
              <div className="w-[45px] shrink-0 border-r-2 border-white bg-[#f5f5f5]" />
              <div className="w-[987px] shrink-0 border-r-2 border-[#c0c0c0] bg-[#f5f5f5] pl-[10px] pt-[8px] text-[21.8px] leading-[24px] font-bold text-[#6e6e6e]">
                コード付きセグメントを読み出すために文書とコードをアクティブ化する
              </div>
              <div className="min-w-0 flex-1 bg-[#f5f5f5]" />
            </div>
          </section>
        </div>
      </div>

      {/* Status bar */}
      <div className="flex h-[66px] shrink-0 items-center rounded-b-[18px] bg-linear-to-b from-[#d0d0d0] to-[#b8b8b8] pb-[6px] pl-[24px] text-[21px] text-[#222]">
        <StatDoc />
        <span className="ml-[9px]">0</span>
        <div className="ml-[111px]"><StatCode /></div>
        <span className="ml-[3px]">0</span>
        <div className="ml-[110px]"><StatSeg /></div>
        <span className="ml-[5px]">0</span>
        <div className="ml-[110px]"><StatSegUser /></div>
        <span className="ml-[2px]">0</span>
        <div className="ml-[114px]"><StatDocUser /></div>
        <div className="ml-[128px]"><StatDocUser round /></div>
        <div className="ml-[129px]"><StatDocDown /></div>
        <div className="ml-[129px]"><StatQuery /></div>
        <span className="ml-[5px] whitespace-nowrap">単純なコーディング・クエリ (コードのOR組み合わせ)</span>
      </div>
    </div>
  );
}
